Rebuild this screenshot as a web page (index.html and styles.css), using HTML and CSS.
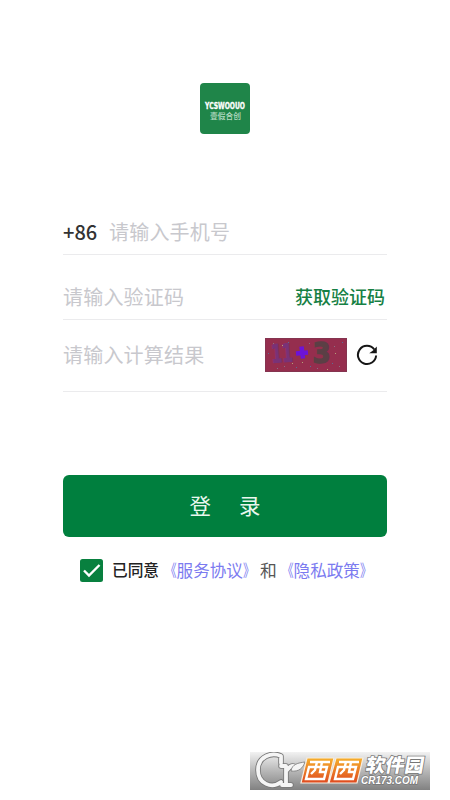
FILE: index.html
```html
<!DOCTYPE html>
<html lang="zh-CN">
<head>
<meta charset="utf-8">
<title>登录</title>
<link rel="stylesheet" href="styles.css">
</head>
<body>
<main class="page">
  <svg class="logo" viewBox="0 0 50 51">
    <rect width="50" height="51" rx="4" fill="#1f8549"/>
    <text class="logo-en" x="5" y="26" textLength="40" lengthAdjust="spacingAndGlyphs">YCSWOOUO</text>
    <text class="logo-cn" x="10" y="35.500" textLength="31" lengthAdjust="spacingAndGlyphs">壹假合创</text>
  </svg>
  <form class="form">
    <div class="row phone"><span class="code">+86</span><span class="hint">请输入手机号</span></div>
    <div class="row sms"><span class="hint">请输入验证码</span><span class="get">获取验证码</span></div>
    <div class="row calc"><span class="hint">请输入计算结果</span>
      <svg class="captcha" viewBox="0 0 82 34">
        <rect width="82" height="34" fill="#952e4e"/>
        <rect x=".5" y=".5" width="81" height="33" fill="none" stroke="#853450"/>
        <text class="digit" x="6" y="24" font-size="25" fill="#793277" stroke="#793277" textLength="22" lengthAdjust="spacingAndGlyphs" transform="rotate(-4 16 15)">11</text>
        <path d="M31 15.500l12-1M36.500 8.500l1.500 12" fill="none" stroke="#6c13d9" stroke-width="4.500"/>
        <text class="digit" x="47.500" y="24.500" font-size="28" fill="#5b3f45" stroke="#5b3f45" stroke-width="1.500" textLength="18" lengthAdjust="spacingAndGlyphs">3</text>
        <g fill="#8b7181"><path d="M8 5h1v1H8zM19 28h1v1h-1zM44 5h1v1h-1zM52 30h1v1h-1zM69 8h1v1h-1zM74 28h1v1h-1zM12 30h1v1h-1z"/></g>
        <g fill="#5e6d93"><path d="M3 15h1v1H3zM23 4h1v1h-1zM31 29h1v1h-1zM77 4h1v1h-1zM67 25h1v1h-1zM45 28h1v1h-1z"/></g>
        <g fill="#b5a078"><path d="M27 25h1v1h-1zM37 24h1v1h-1zM70 15h1v1h-1zM17 7h1v1h-1zM62 31h1v1h-1z"/></g>
      </svg>
      <svg class="refresh" viewBox="0 0 22 22"><path d="M18.200 5.300A9.100 9.100 0 1 0 20.100 11.500" fill="none" stroke="#161616" stroke-width="2"/><path d="M20.800 2.500v6.800h-7.600l3.800-2.800z" fill="#161616"/></svg>
    </div>
    <div class="login"><span>登</span><span>录</span></div>
    <div class="agree">
      <svg class="check" viewBox="0 0 23 23"><rect width="23" height="23" rx="2.500" fill="#08803f"/><path d="M4 11.500l5 5L19.500 6" fill="none" stroke="#fff" stroke-width="2.400"/></svg>
      <span class="agreed">已同意</span><span class="link"><span class="open">《</span>服务协议<span class="close">》</span></span><span class="and">和</span><span class="link"><span class="open">《</span>隐私政策<span class="close">》</span></span>
    </div>
  </form>
  <svg class="mark" viewBox="0 0 180 38">
    <defs>
      <linearGradient id="gray" x2="0" y2="1"><stop stop-color="#f2f2f2"/><stop offset=".5" stop-color="#b7b7b7"/><stop offset="1" stop-color="#818181"/></linearGradient>
      <linearGradient id="orange" x2="0" y2="1"><stop stop-color="#f6b02d"/><stop offset="1" stop-color="#df491f"/></linearGradient>
    </defs>
    <rect width="180" height="38" fill="url(#gray)"/>
    <g fill="none" stroke-linecap="round" stroke-linejoin="round">
      <g stroke="#777" stroke-width="5.500"><path d="M31 11V4c-9-4-23 0-23 14 0 14 14 19 23 12"/><path d="M31 14h5v18M32 33h9M37 18c3-4 6-5 9-3"/></g>
      <g stroke="#f5f5f5" stroke-width="3.800"><path d="M31 11V4c-9-4-23 0-23 14 0 14 14 19 23 12"/><path d="M31 14h5v18M32 33h9M37 18c3-4 6-5 9-3"/></g>
    </g>
    <path d="M41 19c1-7 7-8 14-9-2 6-6 10-14 9z" fill="#f5f5f5" stroke="#777" stroke-width=".8"/>
    <path d="M57 6h27l-6 25H51zM86 6h27l-6 25H79z" fill="url(#orange)" stroke="#f8eee0" stroke-width="1.200"/>
    <g fill="none" stroke="#fff" stroke-width="2.400">
      <path d="M60 10h20M59 15h18l-3 12H56zM67 10l-2 8-4 4M72 10l-2 10h5"/>
      <path d="M89 10h20M88 15h18l-3 12H85zM96 10l-2 8-4 4M101 10l-2 10h5"/>
    </g>
    <text class="mark-cn" x="0" y="0" transform="translate(115 20) skewX(-10)" textLength="58" lengthAdjust="spacingAndGlyphs">软件园</text>
    <text class="mark-en" x="111" y="32" textLength="57" lengthAdjust="spacingAndGlyphs">CR173.COM</text>
  </svg>
</main>
</body>
</html>
```
FILE: styles.css
```css
* { box-sizing: border-box; }
body { margin: 0; background: #fff; font-family: "Noto Sans CJK SC", sans-serif; }
.page { height: 800px; display: flex; flex-direction: column; align-items: flex-start; overflow: hidden; }
.logo { width: 50px; height: 51px; margin: 83px 0 0 200px; flex: none; }
.logo-en { font: 700 8px "DejaVu Sans", sans-serif; fill: #fff; stroke: #fff; stroke-width: .3px; }
.logo-cn { font: 500 8px "Noto Sans CJK SC", sans-serif; fill: #b7dcc4; }
.form { width: 324px; margin: 77px 0 0 63px; }
.row { display: flex; align-items: center; border-bottom: 1px solid #ebebed; line-height: 30px; white-space: nowrap; }
.hint { font-size: 20px; letter-spacing: .2px; color: #c8c8cd; }
.phone { height: 44px; padding-bottom: 1px; }
.code { width: 46px; font-size: 20px; font-weight: 500; color: #333; }
.sms { height: 65px; padding-top: 19px; justify-content: space-between; }
.get { font-size: 18px; font-weight: 500; color: #168044; margin-right: 2px; padding-bottom: 2px; }
.calc { height: 72px; padding-bottom: 1px; }
.calc .hint { width: 202px; padding-bottom: 1px; }
.captcha { width: 82px; height: 34px; overflow: visible; }
.digit { font-family: "DejaVu Sans", sans-serif; font-weight: 700; }
.refresh { width: 22px; height: 22px; margin-left: 9px; }
.login { height: 62px; margin-top: 83px; padding-bottom: 3px; border-radius: 6px; background: #007f3e; color: #e9f7ee; font-size: 21.5px; display: flex; align-items: center; justify-content: center; gap: 28px; }
.agree { height: 24px; margin: 21px 0 0 17px; display: flex; align-items: center; white-space: nowrap; line-height: 24px; }
.check { width: 23px; height: 23px; margin-right: 9px; flex: none; }
.agreed { width: 48px; font-size: 15.7px; font-weight: 500; color: #222; }
.link { width: 100px; font-size: 16.6px; color: #7b7bf0; }
.open, .close { display: inline-block; transform: scaleX(.7); }
.open { transform-origin: right; }
.close { transform-origin: left; }
.and { width: 17px; font-size: 16.8px; color: #555; }
.mark { width: 180px; height: 38px; margin: auto 0 10px 250px; flex: none; }
.mark-cn { font: 900 19px "Noto Sans CJK SC", sans-serif; fill: #fff; stroke: #777; stroke-width: 1.6px; paint-order: stroke; }
.mark-en { font: italic 700 11px "Liberation Sans", sans-serif; fill: #fff; stroke: #777; stroke-width: 1.4px; paint-order: stroke; }
```
